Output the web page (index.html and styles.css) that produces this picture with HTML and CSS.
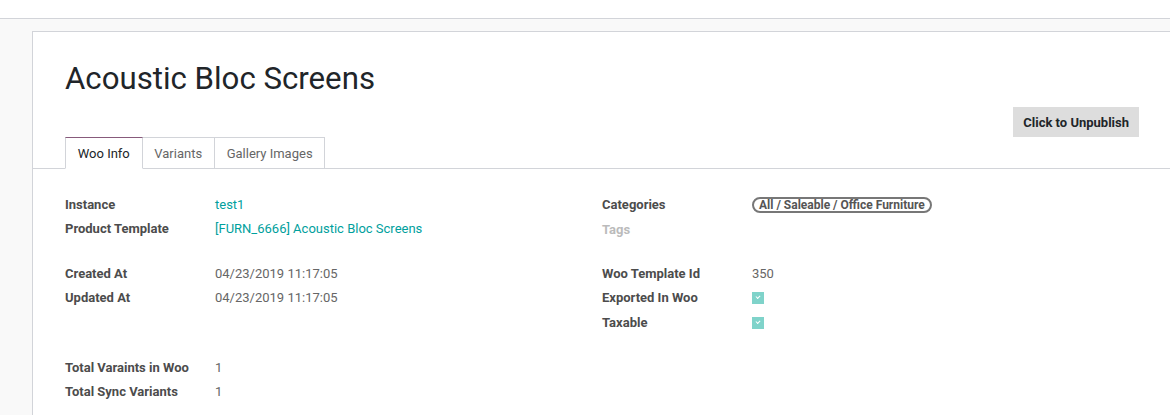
FILE: index.html
```html
<!DOCTYPE html>
<html lang="en">
<head>
    <meta charset="UTF-8">
    <title>Acoustic Bloc Screens</title>
    <link rel="stylesheet" href="styles.css">
</head>
<body>
    <header class="topbar"></header>
    <main class="content">
        <div class="sheet">
            <h1 class="title">Acoustic Bloc Screens</h1>
            <div class="actions">
                <button class="btn-publish">Click to Unpublish</button>
            </div>
            <ul class="tabs">
                <li class="tab active">Woo Info</li>
                <li class="tab">Variants</li>
                <li class="tab">Gallery Images</li>
            </ul>
            <section class="tab-body">
                <div class="columns">
                    <div class="col">
                        <div class="group">
                            <div class="row"><span class="label">Instance</span><a class="value link">test1</a></div>
                            <div class="row tall"><span class="label">Product Template</span><a class="value link">[FURN_6666] Acoustic Bloc Screens</a></div>
                        </div>
                        <div class="group">
                            <div class="row"><span class="label">Created At</span><span class="value">04/23/2019 11:17:05</span></div>
                            <div class="row"><span class="label">Updated At</span><span class="value">04/23/2019 11:17:05</span></div>
                        </div>
                    </div>
                    <div class="col">
                        <div class="group">
                            <div class="row tall"><span class="label">Categories</span><span class="value"><span class="tag">All / Saleable / Office Furniture</span></span></div>
                            <div class="row"><span class="label muted">Tags</span><span class="value"></span></div>
                        </div>
                        <div class="group">
                            <div class="row"><span class="label">Woo Template Id</span><span class="value">350</span></div>
                            <div class="row tall"><span class="label">Exported In Woo</span><span class="value"><span class="check"></span></span></div>
                            <div class="row tall"><span class="label">Taxable</span><span class="value"><span class="check"></span></span></div>
                        </div>
                    </div>
                </div>
                <div class="group">
                    <div class="row"><span class="label">Total Varaints in Woo</span><span class="value">1</span></div>
                    <div class="row"><span class="label">Total Sync Variants</span><span class="value">1</span></div>
                </div>
            </section>
        </div>
    </main>
</body>
</html>
```

FILE: styles.css
```css
body {
    margin: 0;
    background-color: #f9f9f9;
    font-family: Roboto, "Liberation Sans", sans-serif;
    font-size: 13px;
    color: #666;
}
.topbar {
    height: 18px;
    background-color: #fff;
    border-bottom: 1px solid #d2d4d9;
}
.content {
    padding: 12px 0 0 32px;
}
.sheet {
    background-color: #fff;
    border: 1px solid #d2d4d9;
    border-right: none;
    border-bottom: none;
    padding: 28px 31px 20px 32px;
}
.title {
    margin: 0;
    font-size: 31.2px;
    line-height: 38px;
    font-weight: 400;
    color: #212529;
}
.actions {
    display: flex;
    justify-content: flex-end;
    margin-top: 9px;
}
.btn-publish {
    height: 30px;
    padding: 0 10px;
    border: none;
    background-color: #dddddd;
    font-family: inherit;
    font-size: 13px;
    font-weight: 700;
    color: #212529;
}
.tabs {
    display: flex;
    list-style: none;
    margin: 0 -31px 0 -32px;
    padding: 0 0 0 32px;
    border-bottom: 1px solid #d2d4d9;
}
.tab {
    height: 29px;
    padding: 1px 11.75px 0;
    line-height: 29px;
    border: 1px solid #d2d4d9;
    border-left: none;
    margin-bottom: -1px;
    color: #666;
}
.tab:first-child {
    border-left: 1px solid #d2d4d9;
}
.tab.active {
    border-top-color: #875a7b;
    border-bottom-color: #fff;
    color: #212529;
}
.tab-body {
    padding-top: 23px;
}
.columns {
    display: grid;
    grid-template-columns: 1fr 1fr;
}
.group + .group,
.columns + .group {
    margin-top: 20px;
}
.row {
    display: flex;
    align-items: center;
    height: 24px;
}
.row.tall {
    height: 25px;
}
.label {
    width: 150px;
    flex: none;
    font-weight: 700;
    color: #4c4c4c;
}
.label.muted {
    color: #bbb;
}
.link {
    color: #00a09d;
    text-decoration: none;
}
.tag {
    display: inline-block;
    border: 2px solid #777;
    border-radius: 9px;
    padding: 0 5px;
    font-size: 12px;
    line-height: 12px;
    font-weight: 700;
    color: #555;
}
.check {
    display: block;
    width: 12px;
    height: 12px;
    background-color: #7fd3ca;
    position: relative;
}
.check::after {
    content: "";
    position: absolute;
    left: 4px;
    top: 3px;
    width: 3px;
    height: 2px;
    border-left: 1px solid #fff;
    border-bottom: 1px solid #fff;
    transform: rotate(-45deg);
}
```
